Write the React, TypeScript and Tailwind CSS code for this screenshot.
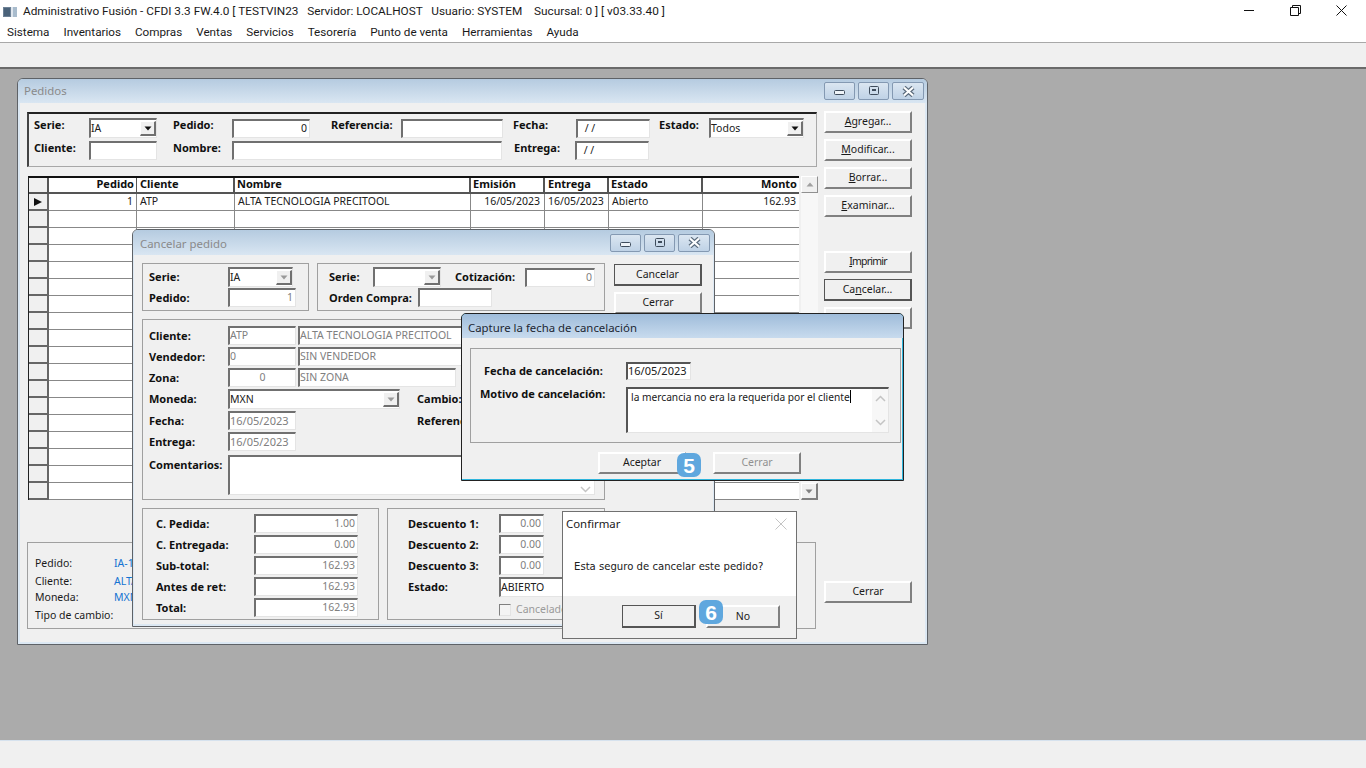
import type { ReactNode } from "react";
import clsx, { type ClassValue } from "clsx";
import { twMerge } from "tailwind-merge";

const cn = (...c: ClassValue[]) => twMerge(clsx(c));

const GRID_ROWS = Array.from({ length: 17 }, (_, i) => i);
const GRID_COLS = [0, 1, 2, 3, 4, 5, 6, 7];
const MONO_DATE = "text-[11px]";

// --- little win32 looking pieces ---

const Lbl = ({ className, children }: { className?: string; children: ReactNode }) => (
  <span className={cn("font-['Noto_Sans',sans-serif] font-bold text-[11px] leading-[14px] text-[#101010] whitespace-pre shrink-0", className)}>
    {children}
  </span>
);

const Field = ({
  className,
  children,
  right,
  dim,
}: {
  className?: string;
  children?: ReactNode;
  right?: boolean;
  dim?: boolean;
}) => (
  <div
    className={cn(
      "h-[19px] shrink-0 bg-white border-t-2 border-l-2 border-t-[#707070] border-l-[#707070] border-b border-r border-b-[#e4e4e4] border-r-[#e4e4e4] flex items-center overflow-hidden whitespace-pre text-[10.5px] font-['Noto_Sans',sans-serif]",
      right && "justify-end pr-[2px]",
      dim ? "text-[#808080]" : "text-[#202020]",
      className
    )}
  >
    {children}
  </div>
);

const Arrow = ({ dim }: { dim?: boolean }) => (
  <div className="w-[16px] h-[15px] shrink-0 bg-[#f0f0f0] border-t border-l border-white border-b-2 border-r-2 border-b-[#707070] border-r-[#707070] flex items-center justify-center">
    <svg width="8" height="5" viewBox="0 0 8 5">
      <path d="M0.5 0.5H7.5L4 4.5Z" fill={dim ? "#9a9a9a" : "#101010"} />
    </svg>
  </div>
);

const Combo = ({
  className,
  children,
  dim,
}: {
  className?: string;
  children?: ReactNode;
  dim?: boolean;
}) => (
  <Field className={cn("justify-between h-[20px]", className)}>
    <span>{children}</span>
    {dim !== undefined && <Arrow dim={dim} />}
  </Field>
);

const Btn = ({
  className,
  children,
  focus,
  dim,
}: {
  className?: string;
  children?: ReactNode;
  focus?: boolean;
  dim?: boolean;
}) => (
  <div
    className={cn(
      "h-[22px] w-[88px] shrink-0 bg-[#f0f0f0] flex items-center justify-center font-['Noto_Sans',sans-serif] text-[10.5px] whitespace-pre",
      focus
        ? "border border-[#555] border-b-2 border-r-2"
        : "border-t-2 border-l-2 border-t-white border-l-white border-b-2 border-r-2 border-b-[#808080] border-r-[#808080]",
      dim ? "text-[#909090]" : "text-[#1a1a1a]",
      className
    )}
  >
    {children}
  </div>
);

const Panel = ({ className, children }: { className?: string; children: ReactNode }) => (
  <div className={cn("border border-[#a0a0a0] shrink-0", className)}>{children}</div>
);

const Row = ({ className, children }: { className?: string; children: ReactNode }) => (
  <div className={cn("flex items-center", className)}>{children}</div>
);

const CtlBtn = ({ kind, className }: { kind: "min" | "max" | "close"; className?: string }) => (
  <div className={cn("h-[18px] border border-[#8499b2] rounded-[2px] bg-gradient-to-b from-[#dbe6f1] to-[#bfd2e6] flex items-center justify-center", className)}>
    {kind === "min" && (
      <svg width="11" height="10" viewBox="0 0 11 10">
        <rect x="0.5" y="4.5" width="10" height="4" rx="1" fill="#eef3f8" stroke="#3e4c5c" />
      </svg>
    )}
    {kind === "max" && (
      <svg width="10" height="10" viewBox="0 0 10 10">
        <rect x="0.5" y="0.5" width="9" height="8" rx="1" fill="none" stroke="#3e4c5c" />
        <rect x="3" y="3" width="4" height="2" fill="#3e4c5c" />
      </svg>
    )}
    {kind === "close" && (
      <svg width="13" height="11" viewBox="0 0 13 11">
        <path d="M2 1.5L11 9.5M11 1.5L2 9.5" stroke="#5b6b7c" strokeWidth="4.5" />
        <path d="M2 1.5L11 9.5M11 1.5L2 9.5" stroke="#ffffff" strokeWidth="2.2" />
      </svg>
    )}
  </div>
);

const Controls = () => (
  <div className="flex gap-[3px]">
    <CtlBtn kind="min" className="w-[31px]" />
    <CtlBtn kind="max" className="w-[31px]" />
    <CtlBtn kind="close" className="w-[32px]" />
  </div>
);

const ScrollChevron = ({ up }: { up?: boolean }) => (
  <svg width="11" height="7" viewBox="0 0 11 7">
    <path d={up ? "M1 6L5.5 1.5L10 6" : "M1 1L5.5 5.5L10 1"} fill="none" stroke="#c4c4c4" strokeWidth="1.5" />
  </svg>
);

const Head = ({ className, children }: { className?: string; children?: ReactNode }) => (
  <div className={cn("bg-white border-b-2 border-r-2 border-[#555] flex items-center", className)}>
    <Lbl className="-mt-[2px]">{children}</Lbl>
  </div>
);

// --- windows ---

const PedidosWindow = () => {
  return (
    <div className="absolute left-[17px] top-[9px] w-[911px] h-[567px] bg-[#dce8f3] border border-[#5e6267] rounded-t-[6px] flex flex-col">
      <div className="h-[24px] shrink-0 rounded-t-[5px] bg-gradient-to-b from-[#b5cbe0] to-[#d9e6f2] flex items-center justify-between pl-[6px] pr-[3px]">
        <span className="font-['Noto_Sans',sans-serif] text-[11.4px] text-[#8a8a8a]">Pedidos</span>
        <Controls />
      </div>
      <div className="flex-1 mx-[2px] mb-[2px] bg-[#f0f0f0] flex pl-[7px]">
        <div className="w-[790px] shrink-0 flex flex-col pt-[9px]">
          <div className="h-[55px] border-t-2 border-l-2 border-t-[#222] border-l-[#444] border-b border-r border-b-[#a8a8a8] border-r-[#a8a8a8] pl-[5px] pt-[4px] flex flex-col gap-[3px]">
            <Row>
              <Lbl className="w-[55px] -mt-[6px]">Serie:</Lbl>
              <Combo className="w-[68px]" dim={false}>IA</Combo>
              <Lbl className="w-[59px] ml-[16px] -mt-[6px]">Pedido:</Lbl>
              <Field className="w-[78px]" right>0</Field>
              <Lbl className="w-[70px] ml-[21px] -mt-[6px]">Referencia:</Lbl>
              <Field className="w-[102px]" />
              <Lbl className="w-[63px] ml-[10px] -mt-[6px]">Fecha:</Lbl>
              <Field className="w-[74px] pl-[4px]"> / /</Field>
              <Lbl className="w-[50px] ml-[9px] -mt-[6px]">Estado:</Lbl>
              <Combo className="w-[95px]" dim={false}>Todos</Combo>
            </Row>
            <Row>
              <Lbl className="w-[55px] -mt-[5px]">Cliente:</Lbl>
              <Field className="w-[68px]" />
              <Lbl className="w-[59px] ml-[16px] -mt-[5px]">Nombre:</Lbl>
              <Field className="w-[270px]" />
              <Lbl className="w-[61px] ml-[12px] -mt-[5px]">Entrega:</Lbl>
              <Field className="w-[74px] pl-[4px]"> / /</Field>
            </Row>
          </div>

          <div className="flex mt-[9px] h-[324px]">
            <div className="w-[771px] ml-[1px] shrink-0 border-l border-[#222] border-t-2 border-t-[#111] grid grid-cols-[20px_88px_98px_236px_74px_64px_94px_96px] grid-rows-[16px] auto-rows-[17px]">
              <div className="bg-[#f0f0f0] border-r-2 border-b-2 border-[#555]" />
              <Head className="justify-end pr-[2px] border-r">Pedido</Head>
              <Head className="pl-[3px]">Cliente</Head>
              <Head className="pl-[2px]">Nombre</Head>
              <Head className="pl-[2px]">Emisión</Head>
              <Head className="pl-[3px]">Entrega</Head>
              <Head className="pl-[2px]">Estado</Head>
              <Head className="justify-end pr-[2px] border-r-0">Monto</Head>

              <div className="bg-[#f0f0f0] border-r-2 border-b-2 border-[#666] flex items-center justify-center">
                <svg width="8" height="8" viewBox="0 0 8 8"><path d="M0 0L8 4L0 8Z" fill="#111" /></svg>
              </div>
              {[
                ["text-right pr-[3px]", "1"],
                ["pl-[3px]", "ATP"],
                ["pl-[3px]", "ALTA TECNOLOGIA PRECITOOL"],
                ["text-right pr-[4px]", "16/05/2023"],
                ["pl-[3px]", "16/05/2023"],
                ["pl-[3px]", "Abierto"],
                ["text-right pr-[3px]", "162.93"],
              ].map(([c, t], i) => (
                <div key={i} className={cn("bg-white border-b border-[#888] leading-[17px] font-['Noto_Sans',sans-serif] text-[10.5px] text-[#202020] whitespace-pre", i < 6 && "border-r", c)}>
                  {t}
                </div>
              ))}
              {GRID_ROWS.map((r) =>
                GRID_COLS.map((c) =>
                  c === 0 ? (
                    <div key={`${r}-${c}`} className="bg-[#f0f0f0] border-r-2 border-b-2 border-[#666]" />
                  ) : (
                    <div key={`${r}-${c}`} className={cn("bg-white border-b border-[#888]", c < 7 && "border-r")} />
                  )
                )
              )}
            </div>
            <div className="w-[17px] ml-[2px] shrink-0 flex flex-col bg-[#f7f7f7]">
              <div className="h-[17px] bg-[#f0f0f0] border-t border-l border-white border-b border-r border-b-[#909090] border-r-[#909090] flex items-center justify-center">
                <svg width="8" height="5" viewBox="0 0 8 5"><path d="M4 0.5L7.5 4.5H0.5Z" fill="#a0a0a0" /></svg>
              </div>
              <div className="flex-1" />
              <div className="h-[17px] bg-[#f0f0f0] border-t border-l border-white border-b-2 border-r-2 border-b-[#808080] border-r-[#808080] flex items-center justify-center">
                <svg width="8" height="5" viewBox="0 0 8 5"><path d="M0.5 0.5H7.5L4 4.5Z" fill="#808080" /></svg>
              </div>
            </div>
          </div>

          <div className="mt-[42px] w-[789px] h-[87px] border border-[#a0a0a0] pl-[7px] pt-[12px] flex flex-col font-['Noto_Sans',sans-serif] text-[10.5px] text-[#1a1a1a] whitespace-nowrap">
            <Row className="h-[18px]"><span className="w-[79px]">Pedido:</span><span className="text-[#1473d2]">IA-1</span></Row>
            <Row className="h-[18px]"><span className="w-[79px]">Cliente:</span><span className="text-[#1473d2]">ALTA</span></Row>
            <Row className="h-[14px]"><span className="w-[79px]">Moneda:</span><span className="text-[#1473d2]">MXN</span></Row>
            <Row className="h-[22px]"><span className="w-[79px]">Tipo de cambio:</span></Row>
          </div>
        </div>

        <div className="ml-[7px] w-[88px] shrink-0 flex flex-col pt-[8px]">
          <div className="flex flex-col gap-[6px]">
            <Btn><span><u>A</u>gregar...</span></Btn>
            <Btn><span><u>M</u>odificar...</span></Btn>
            <Btn><span><u>B</u>orrar...</span></Btn>
            <Btn><span><u>E</u>xaminar...</span></Btn>
          </div>
          <div className="flex flex-col gap-[6px] mt-[34px]">
            <Btn><span className="tracking-[-0.8px]"><u>I</u>mprimir</span></Btn>
            <Btn focus><span>Ca<u>n</u>celar...</span></Btn>
            <Btn />
          </div>
          <Btn className="mt-[252px]">Cerrar</Btn>
        </div>
      </div>
    </div>
  );
};

const CancelarWindow = () => (
  <div className="absolute left-[132px] top-[160px] w-[583px] h-[398px] bg-[#dce8f3] border border-[#5e6267] rounded-t-[6px] flex flex-col">
    <div className="h-[25px] shrink-0 rounded-t-[5px] bg-gradient-to-b from-[#b5cbe0] to-[#d9e6f2] flex items-center justify-between pl-[7px] pr-[4px]">
      <span className="font-['Noto_Sans',sans-serif] text-[11.4px] text-[#8a8a8a] mt-[3px]">Cancelar pedido</span>
      <Controls />
    </div>
    <div className="flex-1 mx-[1px] mb-[2px] bg-[#f0f0f0] flex pl-[8px] pt-[8px]">
      <div className="w-[463px] shrink-0 flex flex-col">
        <div className="flex gap-[8px]">
          <Panel className="w-[167px] h-[48px] pl-[6px] pt-[3px] flex flex-col gap-[1px]">
            <Row><Lbl className="w-[79px]">Serie:</Lbl><Combo className="w-[65px]" dim>IA</Combo></Row>
            <Row><Lbl className="w-[79px]">Pedido:</Lbl><Field className="w-[68px]" right dim>1</Field></Row>
          </Panel>
          <Panel className="w-[288px] h-[48px] pl-[11px] pt-[3px] flex flex-col gap-[1px]">
            <Row>
              <Lbl className="w-[44px]">Serie:</Lbl>
              <Combo className="w-[68px]" dim />
              <Lbl className="w-[70px] ml-[14px]">Cotización:</Lbl>
              <Field className="w-[70px]" right dim>0</Field>
            </Row>
            <Row>
              <Lbl className="w-[89px]">Orden Compra:</Lbl>
              <Field className="w-[74px]" />
            </Row>
          </Panel>
        </div>

        <Panel className="mt-[8px] w-[463px] h-[181px] pl-[6px] pt-[6px] flex flex-col gap-[2px]">
          <Row><Lbl className="w-[79px]">Cliente:</Lbl><Field className="w-[68px]" dim>ATP</Field><Field className="w-[230px] ml-[2px]" dim>ALTA TECNOLOGIA PRECITOOL</Field></Row>
          <Row><Lbl className="w-[79px]">Vendedor:</Lbl><Field className="w-[68px]" dim>0</Field><Field className="w-[230px] ml-[2px]" dim>SIN VENDEDOR</Field></Row>
          <Row><Lbl className="w-[79px]">Zona:</Lbl><Field className="w-[68px] justify-center" dim>0</Field><Field className="w-[158px] ml-[2px]" dim>SIN ZONA</Field></Row>
          <Row>
            <Lbl className="w-[79px]">Moneda:</Lbl>
            <Combo className="w-[172px]" dim>MXN</Combo>
            <Lbl className="ml-[17px]">Cambio:</Lbl>
          </Row>
          <Row>
            <Lbl className="w-[79px]">Fecha:</Lbl>
            <Field className={cn("w-[68px]", MONO_DATE)} dim>16/05/2023</Field>
            <Lbl className="ml-[121px]">Referencia:</Lbl>
          </Row>
          <Row><Lbl className="w-[79px]">Entrega:</Lbl><Field className={cn("w-[68px]", MONO_DATE)} dim>16/05/2023</Field></Row>
          <div className="flex items-start mt-[2px]">
            <Lbl className="w-[79px] mt-[3px]">Comentarios:</Lbl>
            <Field className="w-[367px] h-[40px] justify-end items-end pr-[3px] pb-[1px]"><ScrollChevron /></Field>
          </div>
        </Panel>

        <div className="flex gap-[8px] mt-[8px]">
          <Panel className="w-[237px] h-[112px] pl-[13px] pt-[5px] flex flex-col gap-[2px]">
            <Row><Lbl className="w-[98px]">C. Pedida:</Lbl><Field className="w-[104px]" right dim>1.00</Field></Row>
            <Row><Lbl className="w-[98px]">C. Entregada:</Lbl><Field className="w-[104px]" right dim>0.00</Field></Row>
            <Row><Lbl className="w-[98px]">Sub-total:</Lbl><Field className="w-[104px]" right dim>162.93</Field></Row>
            <Row><Lbl className="w-[98px]">Antes de ret:</Lbl><Field className="w-[104px]" right dim>162.93</Field></Row>
            <Row><Lbl className="w-[98px]">Total:</Lbl><Field className="w-[104px]" right dim>162.93</Field></Row>
          </Panel>
          <Panel className="w-[218px] h-[112px] pl-[20px] pt-[5px] flex flex-col gap-[2px]">
            <Row><Lbl className="w-[91px]">Descuento 1:</Lbl><Field className="w-[45px]" right dim>0.00</Field></Row>
            <Row><Lbl className="w-[91px]">Descuento 2:</Lbl><Field className="w-[45px]" right dim>0.00</Field></Row>
            <Row><Lbl className="w-[91px]">Descuento 3:</Lbl><Field className="w-[45px]" right dim>0.00</Field></Row>
            <Row><Lbl className="w-[91px]">Estado:</Lbl><Field className="w-[100px] h-[20px]">ABIERTO</Field></Row>
            <Row className="pl-[91px] mt-[3px] gap-[5px]">
              <div className="w-[12px] h-[12px] border border-t-[#808080] border-l-[#808080] border-r-[#e4e4e4] border-b-[#e4e4e4] bg-[#f4f4f4]" />
              <span className="font-['Noto_Sans',sans-serif] text-[10.5px] text-[#9a9a9a]">Cancelado</span>
            </Row>
          </Panel>
        </div>
      </div>
      <div className="ml-[9px] flex flex-col gap-[6px] pt-[1px]">
        <Btn focus>Cancelar</Btn>
        <Btn>Cerrar</Btn>
      </div>
    </div>
  </div>
);

const CapturaWindow = () => (
  <div className="absolute left-[461px] top-[244px] w-[443px] h-[168px] bg-[#2fb5dc] border border-[#222] rounded-t-[5px] flex flex-col">
    <div className="h-[24px] shrink-0 rounded-t-[4px] bg-gradient-to-b from-[#9fbcda] to-[#c8dbee] flex items-center pl-[6px]">
      <span className="font-['Noto_Sans',sans-serif] text-[11.4px] text-[#1c2733] mt-[3px]">Capture la fecha de cancelación</span>
    </div>
    <div className="flex-1 mb-[1px] mr-[1px] bg-[#f0f0f0] pl-[8px] pt-[10px] flex flex-col">
      <Panel className="w-[431px] h-[95px] flex flex-col pt-[13px]">
        <Row>
          <Lbl className="w-[155px] pl-[13px]">Fecha de cancelación:</Lbl>
          <Field className={cn("w-[65px] h-[18px] border-t-[#555] border-l-[#555]", MONO_DATE)}>16/05/2023</Field>
        </Row>
        <div className="flex items-start mt-[7px]">
          <Lbl className="w-[155px] pl-[9px]">Motivo de cancelación:</Lbl>
          <Field className="w-[263px] h-[46px] border-t-[#555] border-l-[#555] items-start pl-[3px] pt-[1px] relative text-[10.2px]">
            <span>la mercancia no era la requerida por el cliente</span>
            <span className="inline-block w-px h-[13px] bg-black" />
            <div className="absolute right-0 top-0 bottom-0 w-[16px] bg-[#f7f7f7] flex flex-col justify-between items-center py-[6px]">
              <ScrollChevron up />
              <ScrollChevron />
            </div>
          </Field>
        </div>
      </Panel>
      <div className="flex pl-[128px] mt-[9px]">
        <Btn>Aceptar</Btn>
        <Btn dim className="ml-[27px]">Cerrar</Btn>
      </div>
    </div>
  </div>
);

const ConfirmarWindow = () => (
  <div className="absolute left-[562px] top-[442px] w-[235px] h-[128px] bg-white border border-[#707070] flex flex-col">
    <Row className="h-[24px] pl-[3px] pr-[9px] justify-between shrink-0">
      <span className="font-['Noto_Sans',sans-serif] text-[11.4px] text-[#202020]">Confirmar</span>
      <svg width="12" height="12" viewBox="0 0 12 12"><path d="M0.5 0.5L11.5 11.5M11.5 0.5L0.5 11.5" stroke="#c4c4c4" /></svg>
    </Row>
    <div className="flex-1 pl-[11px] pt-[24px]">
      <span className="font-['DejaVu_Sans',sans-serif] text-[10.1px] leading-[14px] text-[#202020] whitespace-pre block">Esta seguro de cancelar este pedido?</span>
    </div>
    <div className="h-[42px] shrink-0 bg-[#f0f0f0] flex pl-[59px] pt-[9px] gap-[10px]">
      <Btn focus className="w-[74px] h-[23px]">Sí</Btn>
      <Btn className="w-[74px] h-[23px]">No</Btn>
    </div>
  </div>
);

const Badge = ({ n, className }: { n: string; className?: string }) => (
  <div className={cn("absolute w-[24px] h-[24px] rounded-[7px] bg-[#5fa7de] flex items-center justify-center font-['Liberation_Sans',sans-serif] font-bold text-[21px] leading-none text-white", className)}>
    {n}
  </div>
);

export default function App() {
  return (
    <div className="w-[1366px] h-[768px] overflow-hidden flex flex-col bg-white">
      <div className="h-[24px] shrink-0 flex items-center pl-[3px] pr-[19px]">
        <svg width="14" height="10" viewBox="0 0 14 10" className="mr-[6px] shrink-0">
          <rect x="0" y="0" width="14" height="10" fill="#dfe6ee" />
          <rect x="0" y="0" width="8" height="10" fill="#6d8196" />
          <rect x="1" y="1" width="6" height="8" fill="#4a6279" />
          <rect x="10" y="0" width="4" height="10" fill="#a9bccd" />
        </svg>
        <span className="font-['Roboto',sans-serif] text-[11.8px] text-[#1a1a1a] whitespace-pre">
          Administrativo Fusión - CFDI 3.3 FW.4.0 [ TESTVIN23   Servidor: LOCALHOST   Usuario: SYSTEM    Sucursal: 0 ] [ v03.33.40 ]
        </span>
        <div className="ml-auto flex items-center gap-[35px] mb-[4px]">
          <svg width="11" height="11" viewBox="0 0 11 11"><path d="M0 5.5H10" stroke="#111" /></svg>
          <svg width="11" height="11" viewBox="0 0 11 11"><path d="M0.5 2.5H8.5V10.5H0.5ZM2.5 2.5V0.5H10.5V8.5H8.5" fill="none" stroke="#111" /></svg>
          <svg width="11" height="11" viewBox="0 0 11 11"><path d="M0.5 0.5L10.5 10.5M10.5 0.5L0.5 10.5" stroke="#111" /></svg>
        </div>
      </div>
      <div className="h-[18px] shrink-0 flex items-center pl-[7px] gap-[14px] font-['Roboto',sans-serif] text-[11.7px] text-[#1a1a1a]">
        {["Sistema", "Inventarios", "Compras", "Ventas", "Servicios", "Tesorería", "Punto de venta", "Herramientas", "Ayuda"].map((m) => (
          <span key={m}>{m}</span>
        ))}
      </div>
      <div className="h-[27px] shrink-0 bg-[#f0f0f0] border-t border-[#a8a8a8] border-b-2 border-b-[#6a6a6a]" />
      <div className="flex-1 relative bg-[#ababab]">
        <PedidosWindow />
        <CancelarWindow />
        <CapturaWindow />
        <ConfirmarWindow />
        <Badge n="5" className="left-[677px] top-[384px]" />
        <Badge n="6" className="left-[699px] top-[531px]" />
      </div>
      <div className="h-[28px] shrink-0 bg-[#f0f0f0] border-t border-[#d6e2ee]" />
    </div>
  );
}
